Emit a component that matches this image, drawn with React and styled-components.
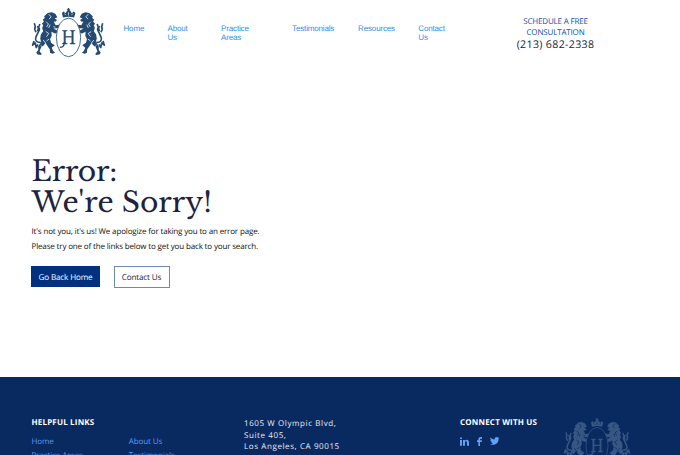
import React from "react";
import styled, { createGlobalStyle } from "styled-components";

const GlobalStyle = createGlobalStyle`
  * { box-sizing: border-box; }
  html, body { margin: 0; padding: 0; overflow: hidden; }
  body { background: #fff; font-family: "Open Sans", "Noto Sans", sans-serif; text-rendering: geometricPrecision; }
  a { text-decoration: none; color: inherit; }
`;

const Page = styled.div`
  width: 680px;
  height: 455px;
  overflow: hidden;
  display: flex;
  flex-direction: column;
`;

const Header = styled.header`
  height: 66px;
  padding-left: 31px;
  display: flex;
  align-items: flex-start;
  flex: none;
`;

const HomeLink = styled.a`
  display: block;
  width: 75px;
  height: 51px;
  margin-top: 7px;
  margin-right: 1px;
`;

const Nav = styled.nav`
  display: grid;
  grid-template-columns: 44px 53.6px 71px 66px 60.2px 40px;
  margin: 23.5px 0 0 16.5px;
  width: 376.5px;
  font: 8px/9px "Liberation Sans", sans-serif;
  letter-spacing: -0.16px;
  color: #2c93ed;
`;

const NavLink = styled.a`
  white-space: pre-line;
`;

const Consult = styled.div`
  width: 111px;
  margin-top: 15.5px;
  text-align: center;
`;

const ConsultLink = styled.a`
  display: block;
  font-size: 8px;
  letter-spacing: -0.17px;
  line-height: 11.5px;
  color: #0c4fb5;
  white-space: pre-line;
`;

const Phone = styled.a`
  display: block;
  font-size: 10.6px;
  line-height: 13px;
  letter-spacing: 0.34px;
  color: #191c34;
`;

const Main = styled.main`
  height: 311px;
  padding: 91px 0 0 31.5px;
  flex: none;
`;

const Title = styled.h1`
  margin: 0;
  font: 400 28.2px/30.5px "Libre Baskerville", "Liberation Serif", serif;
  color: #20233f;
  white-space: nowrap;
`;

const TitleLine = styled.span`
  display: block;
  letter-spacing: ${(p) => p.$spacing};
`;

const Message = styled.p`
  margin: 5.5px 0 0;
  font-size: 8px;
  letter-spacing: -0.155px;
  line-height: 15px;
  color: #111;
  white-space: pre-line;
`;

const Actions = styled.div`
  display: flex;
  gap: 13.5px;
  margin: 12.5px 0 0 -0.5px;
`;

const Button = styled.a`
  width: ${(p) => (p.$primary ? "69px" : "56px")};
  height: ${(p) => (p.$primary ? "21px" : "22px")};
  padding-top: 1px;
  display: flex;
  align-items: center;
  justify-content: center;
  font-size: 8.1px;
  letter-spacing: -0.14px;
  background: ${(p) => (p.$primary ? "#003180" : "#fff")};
  color: ${(p) => (p.$primary ? "#fff" : "#202238")};
  border: 1px solid ${(p) => (p.$primary ? "#003180" : "#6c89b8")};
`;

const Footer = styled.footer`
  flex: 1;
  background: #082a60;
  padding: 40px 0 0 31.5px;
  display: flex;
  align-items: flex-start;
  overflow: hidden;
`;

const LinksBlock = styled.section`
  width: 212.5px;
`;

const FooterTitle = styled.h2`
  margin: 0;
  font-size: 8px;
  line-height: 12px;
  font-weight: 700;
  letter-spacing: 0.18px;
  color: #fff;
  white-space: nowrap;
`;

const LinkGrid = styled.div`
  display: grid;
  grid-template-columns: 97.3px 97px;
  margin-top: 6px;
  font-size: 8px;
  letter-spacing: -0.1px;
  line-height: 14px;
  color: #5c98f4;
`;

const Address = styled.address`
  width: 216px;
  margin-top: 1px;
  font-style: normal;
  font-size: 8px;
  line-height: 11.5px;
  letter-spacing: 0.6px;
  color: #e9edf5;
  white-space: pre-line;
`;

const Connect = styled.section`
  width: 103px;
`;

const Social = styled.div`
  display: flex;
  align-items: center;
  margin-top: 7.5px;
`;

const FooterCrest = styled.div`
  width: 68px;
  height: 48px;
`;

const CrestSvg = styled.svg`
  display: block;
  width: 100%;
  height: 100%;
`;

const CrestLetter = styled.text`
  font-family: "Libre Baskerville", "Liberation Serif", serif;
  font-size: 55px;
`;

function Lion() {
  return (
    <>
      <path d="M78 44L84 38 96 36 107 41 113 51 105 55 112 60 107 65 102 64 108 76 118 74 121 80 113 85 101 86 114 93 114 99 106 101 95 96 96 108 91 119 94 129 105 137 96 145 100 154 106 160 98 163 91 160 90 149 83 139 77 130 72 137 64 143 59 156 65 162 64 167 53 165 49 160 55 151 55 139 64 128 61 116 63 104 70 94 67 84 70 76 66 71 72 65 69 58 75 54 73 48Z" />
      <path d="M63 129Q42 128 48 112Q53 101 58 91Q61 84 51 80M49 97Q42 90 46 80L43 70M53 94Q56 81 60 72M42 124L38 137 46 130 49 144 54 134" fill="none" strokeWidth="5" strokeLinejoin="round" stroke="currentColor" />
    </>
  );
}

function Crest({ color, detail }) {
  return (
    <CrestSvg viewBox="33 20 228 156" preserveAspectRatio="none" color={color} fill="currentColor" aria-label="H crest">
      <Lion />
      <g transform="translate(294 0) scale(-1 1)">
        <Lion />
      </g>
      <g fill="none" stroke={detail} strokeWidth="2.3">
        <path d="M87 42L94 50 88 57M79 65L86 72 81 81M91 74L87 84M78 95L87 101 80 111M88 118L80 124M70 121L78 131M62 137L67 142M101 80L107 82" />
        <path d="M207 42L200 50 206 57M215 65L208 72 213 81M203 74L207 84M216 95L207 101 214 111M206 118L214 124M224 121L216 131M232 137L227 142" />
      </g>
      <ellipse cx="147" cy="113" rx="37" ry="59" fill={detail} stroke="currentColor" strokeWidth="2.5" />
      <path d="M130 52L127 38 132 34 138 39 143 31 147 28 152 31 157 39 163 34 168 38 164 52Q147 47 130 52Z" />
      <path d="M147 23V32M142 27H152M134 43H160M140 46L147 34 154 46" fill="none" stroke="currentColor" strokeWidth="3" />
      <path d="M135 40L139 45M147 36V46M160 40L156 45" fill="none" stroke={detail} strokeWidth="2" />
      <CrestLetter x="147" y="134" textAnchor="middle" textLength="43" lengthAdjust="spacingAndGlyphs" stroke="currentColor" strokeWidth="1">H</CrestLetter>
      <path d="M134 128Q135 144 121 143" fill="none" stroke="currentColor" strokeWidth="4" />
    </CrestSvg>
  );
}

const SocialIcon = styled.svg`
  display: block;
  width: ${(p) => p.$w}px;
  height: ${(p) => p.$h}px;
  margin-right: ${(p) => p.$gap}px;
  fill: #65a0f7;
`;

const nav = ["Home", "About\nUs", "Practice\nAreas", "Testimonials", "Resources", "Contact\nUs"];
const footerLinks = ["Home", "About Us", "Practice Areas", "Testimonials"];

export default function App() {
  return (
    <Page>
      <GlobalStyle />
      <Header>
        <HomeLink href="#"><Crest color="#254a72" detail="#fff" /></HomeLink>
        <Nav>{nav.map((label) => <NavLink href="#" key={label}>{label}</NavLink>)}</Nav>
        <Consult>
          <ConsultLink href="#">{"SCHEDULE A FREE\nCONSULTATION"}</ConsultLink>
          <Phone href="#">(213) 682-2338</Phone>
        </Consult>
      </Header>
      <Main>
        <Title>
          <TitleLine $spacing="-0.25px">Error:</TitleLine>
          <TitleLine $spacing="0">We're Sorry!</TitleLine>
        </Title>
        <Message>{"It's not you, it's us! We apologize for taking you to an error page.\nPlease try one of the links below to get you back to your search."}</Message>
        <Actions>
          <Button href="#" $primary>Go Back Home</Button>
          <Button href="#">Contact Us</Button>
        </Actions>
      </Main>
      <Footer>
        <LinksBlock>
          <FooterTitle>HELPFUL LINKS</FooterTitle>
          <LinkGrid>{footerLinks.map((label) => <a href="#" key={label}>{label}</a>)}</LinkGrid>
        </LinksBlock>
        <Address>{"1605 W Olympic Blvd,\nSuite 405,\nLos Angeles, CA 90015"}</Address>
        <Connect>
          <FooterTitle>CONNECT WITH US</FooterTitle>
          <Social>
            <SocialIcon viewBox="0 0 27 27" $w={9} $h={9} $gap={8}>
              <path d="M0 9H6V26H0ZM3 1A3 3 0 1 1 3 7A3 3 0 0 1 3 1M9 9H15V12Q17 8 21 8Q27 8 27 16V26H21V17Q21 13 18 13Q15 13 15 17V26H9Z" />
            </SocialIcon>
            <SocialIcon viewBox="0 0 15 27" $w={5} $h={9} $gap={8}>
              <path d="M4 27V15H0V10H4V7Q4 0 11 0H15V5H12Q9 5 9 8V10H15L14 15H9V27Z" />
            </SocialIcon>
            <SocialIcon viewBox="0 2 24 20" $w={9.5} $h={8} $gap={0}>
              <path d="M23.95 4.57a10 10 0 0 1-2.82.77 4.96 4.96 0 0 0 2.16-2.72c-.95.55-2 .95-3.13 1.18a4.92 4.92 0 0 0-8.38 4.48C7.69 8.1 4.07 6.13 1.64 3.16a4.92 4.92 0 0 0 1.52 6.57 4.9 4.9 0 0 1-2.23-.61v.06a4.92 4.92 0 0 0 3.95 4.83 5 5 0 0 1-2.21.08 4.94 4.94 0 0 0 4.6 3.42A9.87 9.87 0 0 1 0 19.54a14 14 0 0 0 7.55 2.21c9.05 0 14-7.5 14-13.98l-.02-.63a10 10 0 0 0 2.42-2.57Z" />
            </SocialIcon>
          </Social>
        </Connect>
        <FooterCrest><Crest color="#385684" detail="#082a60" /></FooterCrest>
      </Footer>
    </Page>
  );
}
